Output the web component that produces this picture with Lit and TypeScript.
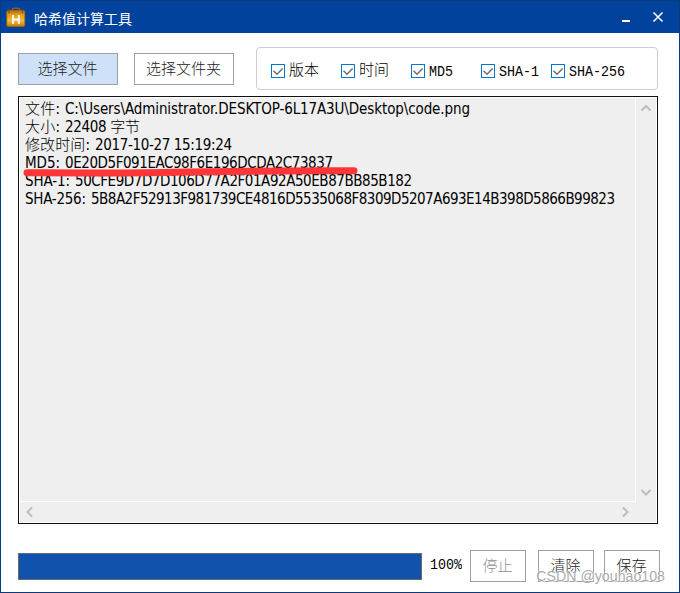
import { LitElement, html, css, svg } from 'lit'
import { customElement, property, state } from 'lit/decorators.js'
import { classMap } from 'lit/directives/class-map.js'
import { styleMap } from 'lit/directives/style-map.js'

@customElement('title-bar')
export class TitleBar extends LitElement {
  @property() caption = ''

  static styles = css`
    :host {
      display: flex;
      align-items: center;
      box-sizing: border-box;
      height: 32px;
      padding: 0 11px 0 5px;
      background: #00429c;
      color: #fff;
      font: 14px/20px "Noto Sans CJK SC", sans-serif;
    }
    .logo {
      width: 20px;
      height: 20px;
      margin-right: 8px;
    }
    .caption {
      flex: 1;
      padding-top: 1px;
      white-space: nowrap;
    }
    button {
      display: block;
      border: none;
      padding: 0;
      background: transparent;
      width: 20px;
      height: 20px;
      margin-left: 12px;
    }
    svg { display: block; }
  `

  render() {
    return html`
      <svg class="logo" viewBox="0 0 20 20">
        <defs>
          <linearGradient id="case" x1="0" y1="0" x2="0" y2="1">
            <stop offset="0" stop-color="#c9800c" />
            <stop offset="0.35" stop-color="#e9a31f" />
            <stop offset="0.65" stop-color="#f3bc4c" />
            <stop offset="0.85" stop-color="#e0920f" />
            <stop offset="1" stop-color="#c67a08" />
          </linearGradient>
        </defs>
        <path d="M6.500 4V2.200q0-1 1-1h5q1 0 1 1V4" fill="none" stroke="#8c5a16" stroke-width="1.6" />
        <rect x="0.8" y="3.5" width="18" height="16" rx="1.5" fill="url(#case)" stroke="#a86808" stroke-width="0.8" />
        <path d="M1.5 5h16.6" stroke="#b87010" stroke-width="1" />
        <path d="M3 3.5v3M16.5 3.5v3" stroke="#8f5a10" stroke-width="1.4" />
        <path d="M7 8v9M12.900 8v9M7 12.400h5.900" stroke="#fff8e8" stroke-width="2" fill="none" />
      </svg>
      <span class="caption">${this.caption}</span>
      <button aria-label="Minimize">
        <svg width="20" height="20"><path d="M6 13h8v2H6z" fill="#fff" /></svg>
      </button>
      <button aria-label="Close">
        <svg width="20" height="20"><path d="M5.500 5.500l9 9M14.500 5.500l-9 9" stroke="#fff" stroke-width="1.6" /></svg>
      </button>
    `
  }
}

@customElement('check-option')
export class CheckOption extends LitElement {
  @property() label = ''
  @property({ type: Boolean }) checked = false

  static styles = css`
    :host {
      display: flex;
      align-items: center;
      width: 70px;
      color: #000;
      font: 13.33px/18px "Liberation Mono", "Noto Sans CJK SC", monospace;
      white-space: nowrap;
    }
    .box {
      flex: none;
      box-sizing: border-box;
      width: 14px;
      height: 14px;
      border: 1px solid #0078d0;
      background: #fff;
      margin-right: 4px;
    }
    .label {
      padding-top: 2px;
      transform: scaleY(1.15);
    }
    .label.cjk {
      font-size: 15px;
      font-weight: 300;
      transform: none;
    }
    svg { display: block; }
  `

  render() {
    return html`
      <span class="box">
        ${this.checked
          ? html`<svg width="12" height="12"><path d="M1.5 5.700l3.500 3.500L10.600 3.500" fill="none" stroke="#6b6b6b" stroke-width="1.4" /></svg>`
          : null}
      </span>
      <span class=${classMap({ label: true, cjk: /[^\x00-\x7f]/.test(this.label) })}>${this.label}</span>
    `
  }
}

@customElement('tool-button')
export class ToolButton extends LitElement {
  @property({ type: Boolean }) active = false
  @property({ type: Boolean }) disabled = false

  static styles = css`
    :host { display: block; }
    button {
      display: block;
      box-sizing: border-box;
      width: 100%;
      height: 32px;
      padding: 0 1px 2px 0;
      border: 1px solid #a0a0a0;
      background: #fff;
      color: #222;
      font: 15px/28px "Noto Sans CJK SC", sans-serif;
      font-weight: 300;
      white-space: nowrap;
    }
    button.active { background: #cfe1f9; }
    button:disabled { color: #909090; }
  `

  render() {
    return html`
      <button class=${classMap({ active: this.active })} ?disabled=${this.disabled}>
        <slot></slot>
      </button>
    `
  }
}

interface ResultLine {
  label: string
  labelWidth: number
  value: string
  valueWidth: number
}

@customElement('result-view')
export class ResultView extends LitElement {
  @property({ attribute: false }) lines: ResultLine[] = []

  static styles = css`
    :host {
      display: grid;
      grid-template-columns: 1fr 20px;
      grid-template-rows: 1fr 20px;
      box-sizing: border-box;
      border: 1px solid #101010;
      background: #efefef;
      box-shadow: inset 0 0 0 1px #fff;
      padding: 1px;
    }
    .text {
      position: relative;
      border-right: 1px solid #fff;
      border-bottom: 1px solid #fff;
      padding: 2px 0 0 5px;
    }
    .lines, .mark {
      display: block;
    }
    .lines text {
      font: 15px "DejaVu Sans Condensed", "Noto Sans CJK SC", sans-serif;
      fill: #000;
    }
    .lines .cjk {
      font-family: "DejaVu Sans Condensed", "Noto Sans CJK SC Light", "Noto Sans CJK SC", sans-serif;
      font-weight: 300;
    }
    .mark {
      position: absolute;
      left: 2px;
      top: 64px;
    }
    .vertical, .horizontal {
      display: flex;
      justify-content: space-between;
      align-items: center;
    }
    .vertical {
      flex-direction: column;
      padding: 4px 1px 3px 0;
    }
    .horizontal { padding: 0 4px 1px 3px; }
    .arrow {
      fill: none;
      stroke: #bdbdbd;
      stroke-width: 2;
    }
  `

  private cjkClass(text: string) {
    return classMap({ cjk: /[^\x00-\x7f]/.test(text) })
  }

  render() {
    return html`
      <div class="text">
        <svg class="lines" width="605" height="120">
          ${this.lines.map((line, i) => svg`
            <text class=${this.cjkClass(line.label)} x="0" y=${14 + i * 18} textLength=${line.labelWidth}>${line.label}</text>
            <text class=${this.cjkClass(line.value)} x=${line.labelWidth + 5} y=${14 + i * 18} textLength=${line.valueWidth}>${line.value}</text>
          `)}
        </svg>
        <svg class="mark" width="340" height="20">
          <path
            d="M5 10.800C50 11 100 11.400 150 10.200S260 9 332 8.800"
            fill="none" stroke="#ff3637" stroke-width="7" stroke-linecap="round"
          />
        </svg>
      </div>
      <div class="vertical">
        <svg width="12" height="12"><path class="arrow" d="M1.500 8.500L6 4 10.500 8.500" /></svg>
        <svg width="12" height="12"><path class="arrow" d="M1.500 3L6 7.500 10.500 3" /></svg>
      </div>
      <div class="horizontal">
        <svg width="12" height="12"><path class="arrow" d="M9 1.500L4.500 6 9 10.500" /></svg>
        <svg width="12" height="12"><path class="arrow" d="M3 1.500L7.500 6 3 10.500" /></svg>
      </div>
    `
  }
}

@customElement('app-root')
export class AppRoot extends LitElement {
  @state() private progress = 100

  private options = ['版本', '时间', 'MD5', 'SHA-1', 'SHA-256']

  private lines: ResultLine[] = [
    { label: '文件:', labelWidth: 35, value: 'C:\\Users\\Administrator.DESKTOP-6L17A3U\\Desktop\\code.png', valueWidth: 405 },
    { label: '大小:', labelWidth: 35, value: '22408 字节', valueWidth: 75 },
    { label: '修改时间:', labelWidth: 65, value: '2017-10-27 15:19:24', valueWidth: 137 },
    { label: 'MD5:', labelWidth: 35, value: '0E20D5F091EAC98F6E196DCDA2C73837', valueWidth: 268 },
    { label: 'SHA-1:', labelWidth: 45, value: '50CFE9D7D7D106D77A2F01A92A50EB87BB85B182', valueWidth: 337 },
    { label: 'SHA-256:', labelWidth: 61, value: '5B8A2F52913F981739CE4816D5535068F8309D5207A693E14B398D5866B99823', valueWidth: 524 },
  ]

  static styles = css`
    :host {
      display: flex;
      flex-direction: column;
      box-sizing: border-box;
      position: relative;
      width: 680px;
      height: 593px;
      border: 1px solid #0b3a7c;
      background: #fff;
      overflow: hidden;
    }
    .toolbar {
      display: flex;
      align-items: center;
      gap: 16px;
      padding: 14px 21px 0 17px;
    }
    .toolbar tool-button { width: 100px; }
    .options {
      display: flex;
      align-items: center;
      flex: 1;
      box-sizing: border-box;
      height: 43px;
      margin-left: 6px;
      padding: 5px 0 0 14px;
      border: 1px solid #ccccdc;
      border-radius: 4px;
    }
    result-view {
      height: 428px;
      margin: 6px 21px 0 17px;
    }
    .footer {
      display: flex;
      align-items: center;
      margin: 26px 19px 0 17px;
    }
    .track {
      box-sizing: border-box;
      width: 404px;
      height: 27px;
      border: 1px solid #696969;
    }
    .fill {
      height: 100%;
      background: #1152ae;
    }
    .percent {
      width: 48px;
      padding-left: 8px;
      box-sizing: border-box;
      font: 13.33px/18px "Liberation Mono", monospace;
      transform: scaleY(1.15);
    }
    .footer tool-button { width: 56px; }
    .clear { margin: 0 10px 0 12px; }
    .watermark {
      position: absolute;
      right: 14px;
      bottom: 6px;
      color: rgba(140, 140, 140, 0.75);
      font: 14.2px/20px "Liberation Sans", sans-serif;
      text-shadow: 0 0 1px #fff, 1px 1px 0 rgba(255, 255, 255, 0.6);
      white-space: nowrap;
    }
  `

  render() {
    return html`
      <title-bar caption="哈希值计算工具"></title-bar>
      <div class="toolbar">
        <tool-button active>选择文件</tool-button>
        <tool-button>选择文件夹</tool-button>
        <div class="options">
          ${this.options.map((label) => html`<check-option .label=${label} checked></check-option>`)}
        </div>
      </div>
      <result-view .lines=${this.lines}></result-view>
      <div class="footer">
        <div class="track">
          <div class="fill" style=${styleMap({ width: `${this.progress}%` })}></div>
        </div>
        <span class="percent">${this.progress}%</span>
        <tool-button disabled>停止</tool-button>
        <tool-button class="clear">清除</tool-button>
        <tool-button>保存</tool-button>
      </div>
      <span class="watermark">CSDN @youhao108</span>
    `
  }
}
